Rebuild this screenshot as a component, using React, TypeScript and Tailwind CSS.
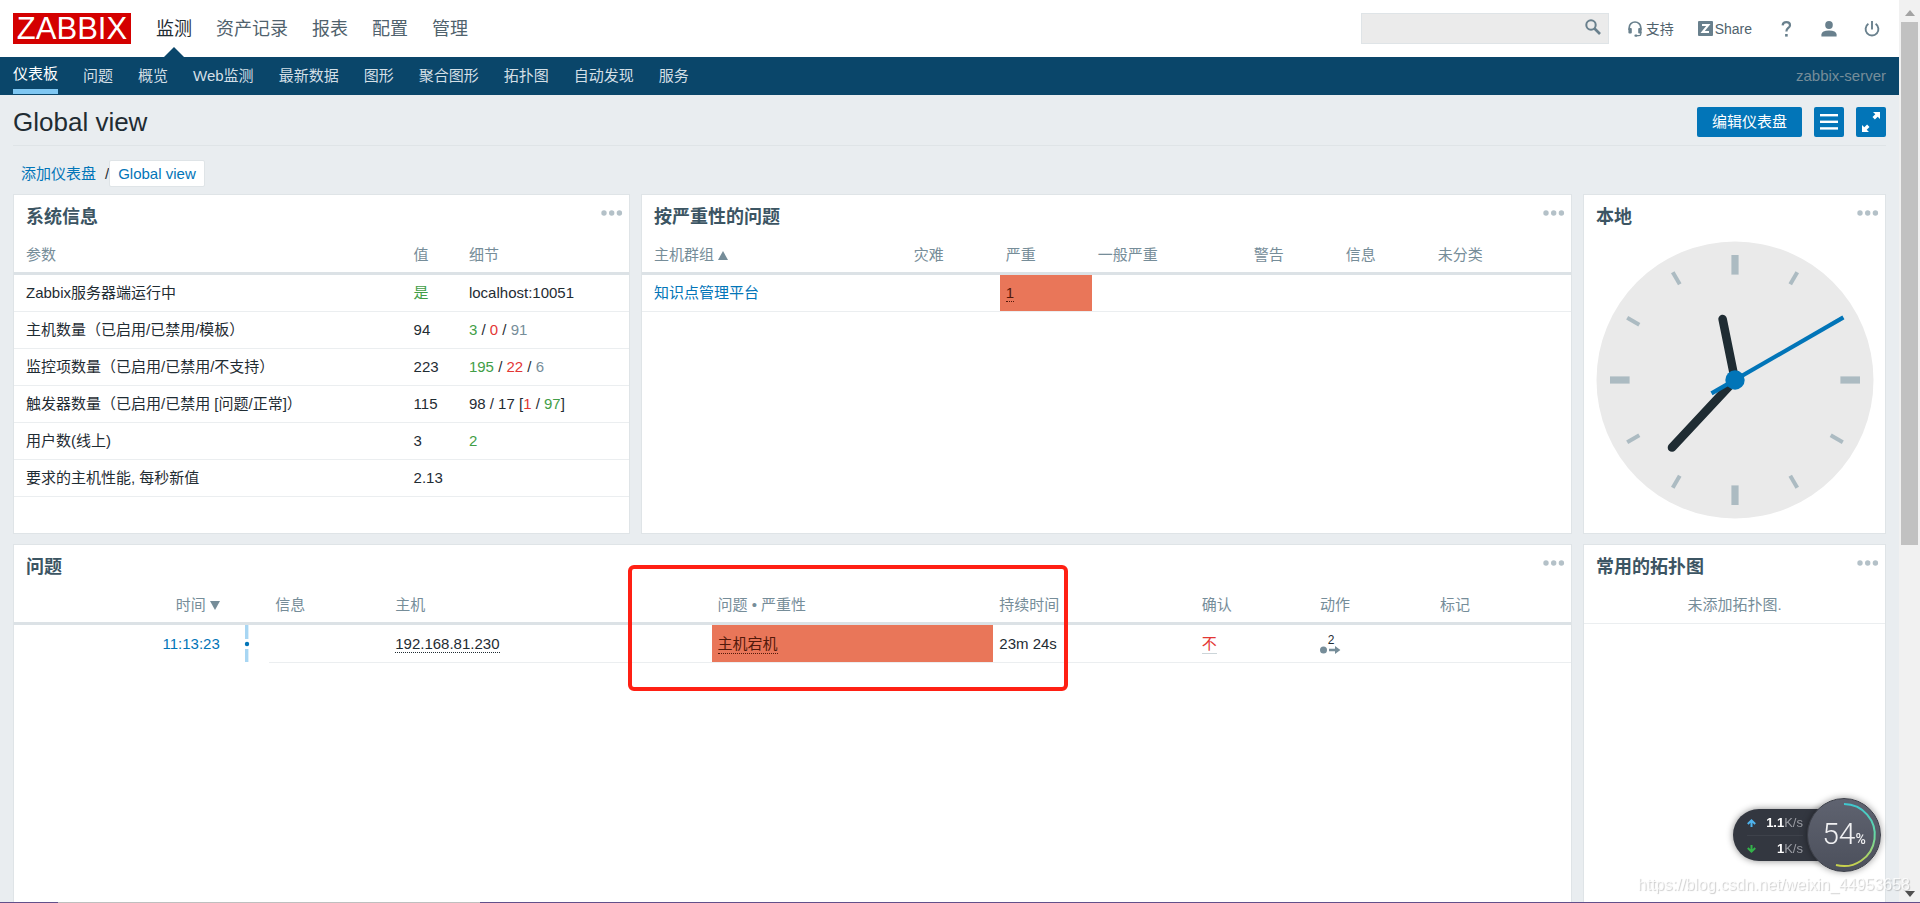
import { ReactNode } from "react";

const topMenu = ["监测", "资产记录", "报表", "配置", "管理"];

const subMenu = [
  "仪表板",
  "问题",
  "概览",
  "Web监测",
  "最新数据",
  "图形",
  "聚合图形",
  "拓扑图",
  "自动发现",
  "服务",
];

const Green = ({ children }: { children: ReactNode }) => (
  <span className="text-[#429e47]">{children}</span>
);
const Red = ({ children }: { children: ReactNode }) => (
  <span className="text-[#e33734]">{children}</span>
);
const Grey = ({ children }: { children: ReactNode }) => (
  <span className="text-[#768d99]">{children}</span>
);

const systemInfo: { name: string; value: ReactNode; details: ReactNode }[] = [
  {
    name: "Zabbix服务器端运行中",
    value: <Green>是</Green>,
    details: "localhost:10051",
  },
  {
    name: "主机数量（已启用/已禁用/模板）",
    value: "94",
    details: (
      <>
        <Green>3</Green> / <Red>0</Red> / <Grey>91</Grey>
      </>
    ),
  },
  {
    name: "监控项数量（已启用/已禁用/不支持）",
    value: "223",
    details: (
      <>
        <Green>195</Green> / <Red>22</Red> / <Grey>6</Grey>
      </>
    ),
  },
  {
    name: "触发器数量（已启用/已禁用 [问题/正常]）",
    value: "115",
    details: (
      <>
        98 / 17 [<Red>1</Red> / <Green>97</Green>]
      </>
    ),
  },
  { name: "用户数(线上)", value: "3", details: <Green>2</Green> },
  { name: "要求的主机性能, 每秒新值", value: "2.13", details: "" },
];

const Th = ({ children, className = "" }: { children?: ReactNode; className?: string }) => (
  <th
    className={`h-[38px] border-b-3 border-[#dce2e6] px-1.5 text-left font-normal whitespace-nowrap text-[#768d99] ${className}`}
  >
    {children}
  </th>
);

const Td = ({ children, className = "" }: { children?: ReactNode; className?: string }) => (
  <td className={`h-[37px] border-b border-[#ebeef0] px-1.5 whitespace-nowrap ${className}`}>
    {children}
  </td>
);

interface WidgetProps {
  title: string;
  className?: string;
  children: ReactNode;
}

const Widget = ({ title, className = "", children }: WidgetProps) => (
  <section className={`relative border border-[#dfe4e7] bg-white ${className}`}>
    <div className="flex h-[42px] items-center justify-between pt-0.5 pr-1.5 pl-3">
      <h4 className="text-lg leading-6 font-bold text-[#3c5563]">{title}</h4>
      <button type="button" aria-label={title} className="mb-2 cursor-pointer">
        <svg width="22" height="6" viewBox="0 0 22 6" fill="#b4c1c8">
          <circle cx="3" cy="3" r="2.7" />
          <circle cx="10.7" cy="3" r="2.7" />
          <circle cx="18.4" cy="3" r="2.7" />
        </svg>
      </button>
    </div>
    {children}
  </section>
);

const SortUp = () => (
  <svg width="10" height="9" viewBox="0 0 10 9" className="ml-1 inline-block align-baseline">
    <path d="M5 0 L10 9 H0 Z" fill="#768d99" />
  </svg>
);

const SortDown = () => (
  <svg width="10" height="9" viewBox="0 0 10 9" className="ml-1 inline-block align-baseline">
    <path d="M0 0 H10 L5 9 Z" fill="#768d99" />
  </svg>
);

const Header = () => (
  <header className="flex h-[57px] items-center bg-white px-[13px]">
    <a
      href="#"
      className="flex h-[31px] w-[118px] items-center justify-center bg-[#d40000] text-[31px] leading-none text-white"
    >
      ZABBIX
    </a>
    <nav className="ml-[25px] flex h-full gap-6 text-lg">
      {topMenu.map((item, i) => (
        <a
          key={item}
          href="#"
          className={`relative flex items-center ${i === 0 ? "text-[#1f2c33]" : "text-[#50626d]"}`}
        >
          <span>{item}</span>
          {i === 0 && (
            <svg
              width="20"
              height="10"
              viewBox="0 0 20 10"
              className="absolute bottom-0 left-1/2 -translate-x-1/2"
            >
              <path d="M10 0 L20 10 H0 Z" fill="#0a466a" />
            </svg>
          )}
        </a>
      ))}
    </nav>
    <div className="ml-auto flex items-center text-sm text-[#50626d]">
      <form className="relative">
        <input
          type="text"
          aria-label="搜索"
          className="block h-[31px] w-[248px] border border-[#dfe4e7] bg-[#ebebeb] pr-8 pl-2"
        />
        <button type="button" aria-label="搜索" className="absolute top-1.5 right-2">
          <svg width="16" height="16" viewBox="0 0 16 16" fill="none" stroke="#69808d">
            <circle cx="6" cy="6" r="4.7" strokeWidth="2" />
            <path d="M9.5 9.5 L15 15" strokeWidth="2.6" />
          </svg>
        </button>
      </form>
      <a href="#" className="ml-[19px] flex items-center gap-1">
        <svg width="14" height="16" viewBox="0 0 14 16" fill="#69808d">
          <path
            d="M1.2 9 V6.8 A5.8 5.8 0 0 1 12.8 6.8 V9"
            fill="none"
            stroke="#69808d"
            strokeWidth="1.7"
          />
          <rect x="0.4" y="7" width="3.4" height="5.4" rx="1" />
          <rect x="10.2" y="7" width="3.4" height="5.4" rx="1" />
          <path d="M12.8 11 V13 Q12.8 14.7 11 14.7 H8" fill="none" stroke="#69808d" strokeWidth="1.3" />
          <rect x="6.4" y="13.6" width="3" height="2.2" rx="1" />
        </svg>
        支持
      </a>
      <a href="#" className="ml-6 flex items-center gap-0.5">
        <svg width="15" height="15" viewBox="0 0 15 15">
          <rect width="15" height="15" rx="1" fill="#69808d" />
          <path d="M4 4 H10.4 L4.6 11 H11" fill="none" stroke="#fff" strokeWidth="2" />
        </svg>
        Share
      </a>
      <a href="#" aria-label="帮助" className="ml-[29px]">
        <svg width="11" height="16" viewBox="0 0 11 16" fill="none" stroke="#69808d" strokeWidth="2.2">
          <path d="M1.6 4.4 Q2 1.2 5.4 1.2 Q9 1.2 9 4.2 Q9 5.8 7.2 7 Q5.4 8.2 5.4 10.6" />
          <path d="M5.4 13 V15.6" strokeWidth="2.6" />
        </svg>
      </a>
      <a href="#" aria-label="用户" className="ml-[29px]">
        <svg width="16" height="16" viewBox="0 0 16 16" fill="#69808d">
          <ellipse cx="8" cy="4" rx="3.8" ry="4" />
          <path d="M0.4 15.4 V13.4 Q0.8 9.6 8 9.6 Q15.2 9.6 15.6 13.4 V15.4 Z" />
        </svg>
      </a>
      <a href="#" aria-label="退出" className="mr-1.5 ml-[27px]">
        <svg width="16" height="16" viewBox="0 0 16 16" fill="none" stroke="#69808d" strokeWidth="1.9">
          <path d="M8 0 V8.4" />
          <path d="M4.4 2.8 A6.4 6.4 0 1 0 11.6 2.8" />
        </svg>
      </a>
    </div>
  </header>
);

const SubMenu = () => (
  <nav className="flex h-[38px] items-stretch justify-between bg-[#0a466a] px-[13px]">
    <div className="flex gap-[25px]">
      {subMenu.map((item, i) => (
        <a
          key={item}
          href="#"
          className={`mb-px flex items-center pt-px ${
            i === 0 ? "border-b-5 border-[#7fc7f2] pt-2 text-white" : "text-[#d3dfe6]"
          }`}
        >
          {item}
        </a>
      ))}
    </div>
    <span className="self-center text-[#768d99]">zabbix-server</span>
  </nav>
);

const PageTitle = () => (
  <div className="flex items-center justify-between border-b border-[#dfe4e7] pt-3 pb-2">
    <h1 className="text-[26px] leading-[30px]">Global view</h1>
    <div className="flex h-[30px] gap-3 text-white">
      <button type="button" className="w-[105px] rounded-xs bg-[#0275b8]">
        编辑仪表盘
      </button>
      <button
        type="button"
        aria-label="菜单"
        className="flex w-[30px] items-center justify-center rounded-xs bg-[#0275b8]"
      >
        <svg width="18" height="16" viewBox="0 0 18 16" fill="#fff">
          <rect width="18" height="2.4" />
          <rect y="6.6" width="18" height="2.4" />
          <rect y="13.2" width="18" height="2.4" />
        </svg>
      </button>
      <button
        type="button"
        aria-label="全屏"
        className="flex w-[30px] items-center justify-center rounded-xs bg-[#0275b8]"
      >
        <svg width="18" height="20" viewBox="0 0 18 20" fill="#fff">
          <path d="M11 0 H18 V7 L15.7 4.7 L12.9 7.5 L10.5 5.1 L13.3 2.3 Z" />
          <path d="M7 20 H0 V13 L2.3 15.3 L5.1 12.5 L7.5 14.9 L4.7 17.7 Z" />
        </svg>
      </button>
    </div>
  </div>
);

const SystemInfo = () => (
  <table className="w-full table-fixed border-separate border-spacing-0">
    <colgroup>
      <col className="w-[64%]" />
      <col className="w-[9%]" />
      <col className="w-[27%]" />
    </colgroup>
    <thead>
      <tr>
        <Th className="pl-3">参数</Th>
        <Th>值</Th>
        <Th>细节</Th>
      </tr>
    </thead>
    <tbody>
      {systemInfo.map((row) => (
        <tr key={row.name}>
          <Td className="pl-3">{row.name}</Td>
          <Td>{row.value}</Td>
          <Td>{row.details}</Td>
        </tr>
      ))}
    </tbody>
  </table>
);

const SeverityTable = () => (
  <table className="w-full table-fixed border-separate border-spacing-0">
    <colgroup>
      <col className="w-[28.6%]" />
      <col className="w-[9.9%]" />
      <col className="w-[9.9%]" />
      <col className="w-[16.8%]" />
      <col className="w-[9.9%]" />
      <col className="w-[9.9%]" />
      <col className="w-[15%]" />
    </colgroup>
    <thead>
      <tr>
        <Th className="pl-3">
          主机群组
          <SortUp />
        </Th>
        <Th>灾难</Th>
        <Th>严重</Th>
        <Th>一般严重</Th>
        <Th>警告</Th>
        <Th>信息</Th>
        <Th>未分类</Th>
      </tr>
    </thead>
    <tbody>
      <tr>
        <Td className="pl-3">
          <a href="#" className="text-[#0275b8]">
            知识点管理平台
          </a>
        </Td>
        <Td />
        <Td className="bg-[#e97659] bg-clip-padding text-[#52190b]">
          <a href="#" className="border-b border-dotted border-[#52190b]">
            1
          </a>
        </Td>
        <Td />
        <Td />
        <Td />
        <Td />
      </tr>
    </tbody>
  </table>
);

const Clock = () => (
  <div className="flex justify-center pt-1">
    <svg viewBox="-139 -139 278 278" className="w-full max-w-[278px]">
      <circle r="138.5" fill="#eaeaea" />
      <g fill="#acbbc2">
        {Array.from({ length: 12 }, (_, i) =>
          i % 3 === 0 ? (
            <rect key={i} x="-3.6" y="-125" width="7.2" height="19.6" transform={`rotate(${i * 30})`} />
          ) : (
            <rect key={i} x="-2" y="-124.5" width="4" height="14" transform={`rotate(${i * 30})`} />
          ),
        )}
      </g>
      <g stroke="#1f2c33" strokeWidth="8.6" strokeLinecap="round">
        <path d="M0 0 L-12.4 -61" />
        <path d="M0 0 L-63 67.5" />
      </g>
      <path d="M-23.5 13.4 L108.4 -62.6" stroke="#0275b8" strokeWidth="4.2" />
      <circle r="9.7" fill="#0275b8" />
    </svg>
  </div>
);

const Problems = () => (
  <table className="w-full table-fixed border-separate border-spacing-0">
    <colgroup>
      <col className="w-[13.6%]" />
      <col className="w-[2.8%]" />
      <col className="w-[7.7%]" />
      <col className="w-[20.7%]" />
      <col className="w-[18.1%]" />
      <col className="w-[13%]" />
      <col className="w-[7.6%]" />
      <col className="w-[7.7%]" />
      <col className="w-[8.8%]" />
    </colgroup>
    <thead>
      <tr>
        <Th className="text-right">
          时间
          <SortDown />
        </Th>
        <Th />
        <Th>信息</Th>
        <Th>主机</Th>
        <Th>问题 • 严重性</Th>
        <Th>持续时间</Th>
        <Th>确认</Th>
        <Th>动作</Th>
        <Th>标记</Th>
      </tr>
    </thead>
    <tbody>
      <tr>
        <Td className="border-white text-right">
          <a href="#" className="text-[#0275b8]">
            11:13:23
          </a>
        </Td>
        <Td className="border-white py-0">
          <svg width="6" height="37" viewBox="0 0 6 37" className="ml-3 block">
            <rect x="1" y="0" width="3.4" height="14" fill="#a8d6f3" />
            <rect x="1" y="24" width="3.4" height="13" fill="#a8d6f3" />
            <circle cx="3" cy="19" r="2.2" fill="#0275b8" />
          </svg>
        </Td>
        <Td />
        <Td>
          <a href="#" className="border-b border-dotted border-[#1f2c33]">
            192.168.81.230
          </a>
        </Td>
        <Td className="bg-[#e97659] bg-clip-padding text-[#52190b]">
          <a href="#" className="inline-block border-b border-dotted border-[#52190b] leading-[18px]">
            主机宕机
          </a>
        </Td>
        <Td>23m 24s</Td>
        <Td>
          <a href="#" className="inline-block border-b border-[#ccd5d9] leading-[18px] text-[#e33734]">
            不
          </a>
        </Td>
        <Td>
          <button type="button" className="flex w-[22px] flex-col items-center text-xs leading-3">
            2
            <svg width="22" height="8" viewBox="0 0 22 8" fill="#768d99">
              <circle cx="3.5" cy="4" r="3.5" />
              <path d="M9 2.8 H15 V0 L20.4 4 L15 8 V5.2 H9 Z" />
            </svg>
          </button>
        </Td>
        <Td />
      </tr>
    </tbody>
  </table>
);

// desktop network meter floating over the page
const SpeedMeter = () => (
  <div className="fixed right-[39px] bottom-[31px] flex items-center">
    <div className="-mr-8 h-[52px] w-[106px] rounded-l-full bg-[#333740] pt-px pr-9 pl-3.5 text-[13px] text-[#9a9ca3] shadow-[0_0_7px_rgba(0,0,0,0.45)]">
      <div className="flex h-[26px] items-center justify-between border-b border-[#3e424b]">
        <svg width="9" height="8" viewBox="0 0 9 8" fill="none" stroke="#4fb4ee" strokeWidth="2">
          <path d="M4.5 8 V1.6 M0.8 5 L4.5 1.4 L8.2 5" />
        </svg>
        <span className="whitespace-nowrap">
          <b className="text-white">1.1</b>K/s
        </span>
      </div>
      <div className="flex h-[26px] items-center justify-between">
        <svg width="9" height="8" viewBox="0 0 9 8" fill="none" stroke="#34b34a" strokeWidth="2">
          <path d="M4.5 0 V6.4 M0.8 3 L4.5 6.6 L8.2 3" />
        </svg>
        <span className="whitespace-nowrap">
          <b className="text-white">1</b>K/s
        </span>
      </div>
    </div>
    <div className="relative flex size-[74px] items-baseline justify-center rounded-full border border-[#3c3f48] bg-linear-to-b from-[#5f6370] to-[#4c505c] pt-[17px] font-['Roboto'] text-[#f0f0f2] shadow-[0_0_7px_rgba(0,0,0,0.4)]">
      <svg viewBox="0 0 72 72" className="absolute inset-0" fill="none">
        <defs>
          <linearGradient id="ring" x1="0" y1="0" x2="0" y2="1">
            <stop offset="0" stopColor="#3fc8cf" />
            <stop offset="0.5" stopColor="#66d8a4" />
            <stop offset="1" stopColor="#c9d14c" />
          </linearGradient>
        </defs>
        <path d="M36 5 A31 31 0 1 1 28 66" stroke="url(#ring)" strokeWidth="2" />
      </svg>
      <span className="text-[30px] leading-9 font-light">54</span>
      <span className="text-sm font-medium">%</span>
    </div>
  </div>
);

const Scrollbar = () => (
  <div
    aria-hidden
    className="flex h-full w-[21px] shrink-0 flex-col items-center bg-[#f1f1f1] pt-2.5 pb-1.5"
  >
    <svg width="10" height="6" viewBox="0 0 10 6" className="shrink-0">
      <path d="M5 0 L10 6 H0 Z" fill="#a3a3a3" />
    </svg>
    <div className="mt-1.5 h-[59%] w-[17px] bg-[#c1c1c1]" />
    <svg width="10" height="6" viewBox="0 0 10 6" className="mt-auto shrink-0">
      <path d="M0 0 H10 L5 6 Z" fill="#505050" />
    </svg>
  </div>
);

export default function App() {
  return (
    <div className="flex h-screen overflow-hidden bg-[#e9edf0] font-['Liberation_Sans','Noto_Sans_CJK_SC',sans-serif] text-[15px] leading-5 text-[#1f2c33]">
      <div className="flex min-w-0 flex-1 flex-col">
        <Header />
        <SubMenu />
        <main className="flex flex-1 flex-col px-[13px]">
          <PageTitle />
          <nav className="mt-3.5 flex h-[27px] items-center pl-2">
            <a href="#" className="text-[#0275b8]">
              添加仪表盘
            </a>
            <span className="ml-[9px]">/</span>
            <a
              href="#"
              className="flex h-full items-center rounded-xs border border-[#dfe4e7] bg-white px-2 text-[#0275b8]"
            >
              Global view
            </a>
          </nav>
          <div className="mt-[7px] grid flex-1 grid-cols-12 grid-rows-[340px_1fr] gap-x-[11px] gap-y-2.5">
            <Widget title="系统信息" className="col-span-4">
              <SystemInfo />
            </Widget>
            <Widget title="按严重性的问题" className="col-span-6">
              <SeverityTable />
            </Widget>
            <Widget title="本地" className="col-span-2">
              <Clock />
            </Widget>
            <Widget title="问题" className="col-span-10 border-b-0">
              <Problems />
              <div className="pointer-events-none absolute top-5 left-[614px] h-[126px] w-[440px] rounded-md border-4 border-[#ff2014]" />
            </Widget>
            <Widget title="常用的拓扑图" className="col-span-2 border-b-0">
              <p className="border-b border-[#ebeef0] py-2 text-center text-[#768d99]">
                未添加拓扑图.
              </p>
            </Widget>
          </div>
        </main>
      </div>
      <Scrollbar />
      <SpeedMeter />
      <p className="pointer-events-none fixed right-2.5 bottom-1.5 text-base text-white/80 [text-shadow:1px_1px_1px_rgba(0,0,0,0.2)]">
        https://blog.csdn.net/weixin_44953658
      </p>
      {/* top edge of the desktop taskbar */}
      <div className="fixed inset-x-0 bottom-0 flex h-px bg-[#62508a]">
        <div className="ml-[3%] w-[22%] bg-[#bfbfbf]" />
      </div>
    </div>
  );
}
